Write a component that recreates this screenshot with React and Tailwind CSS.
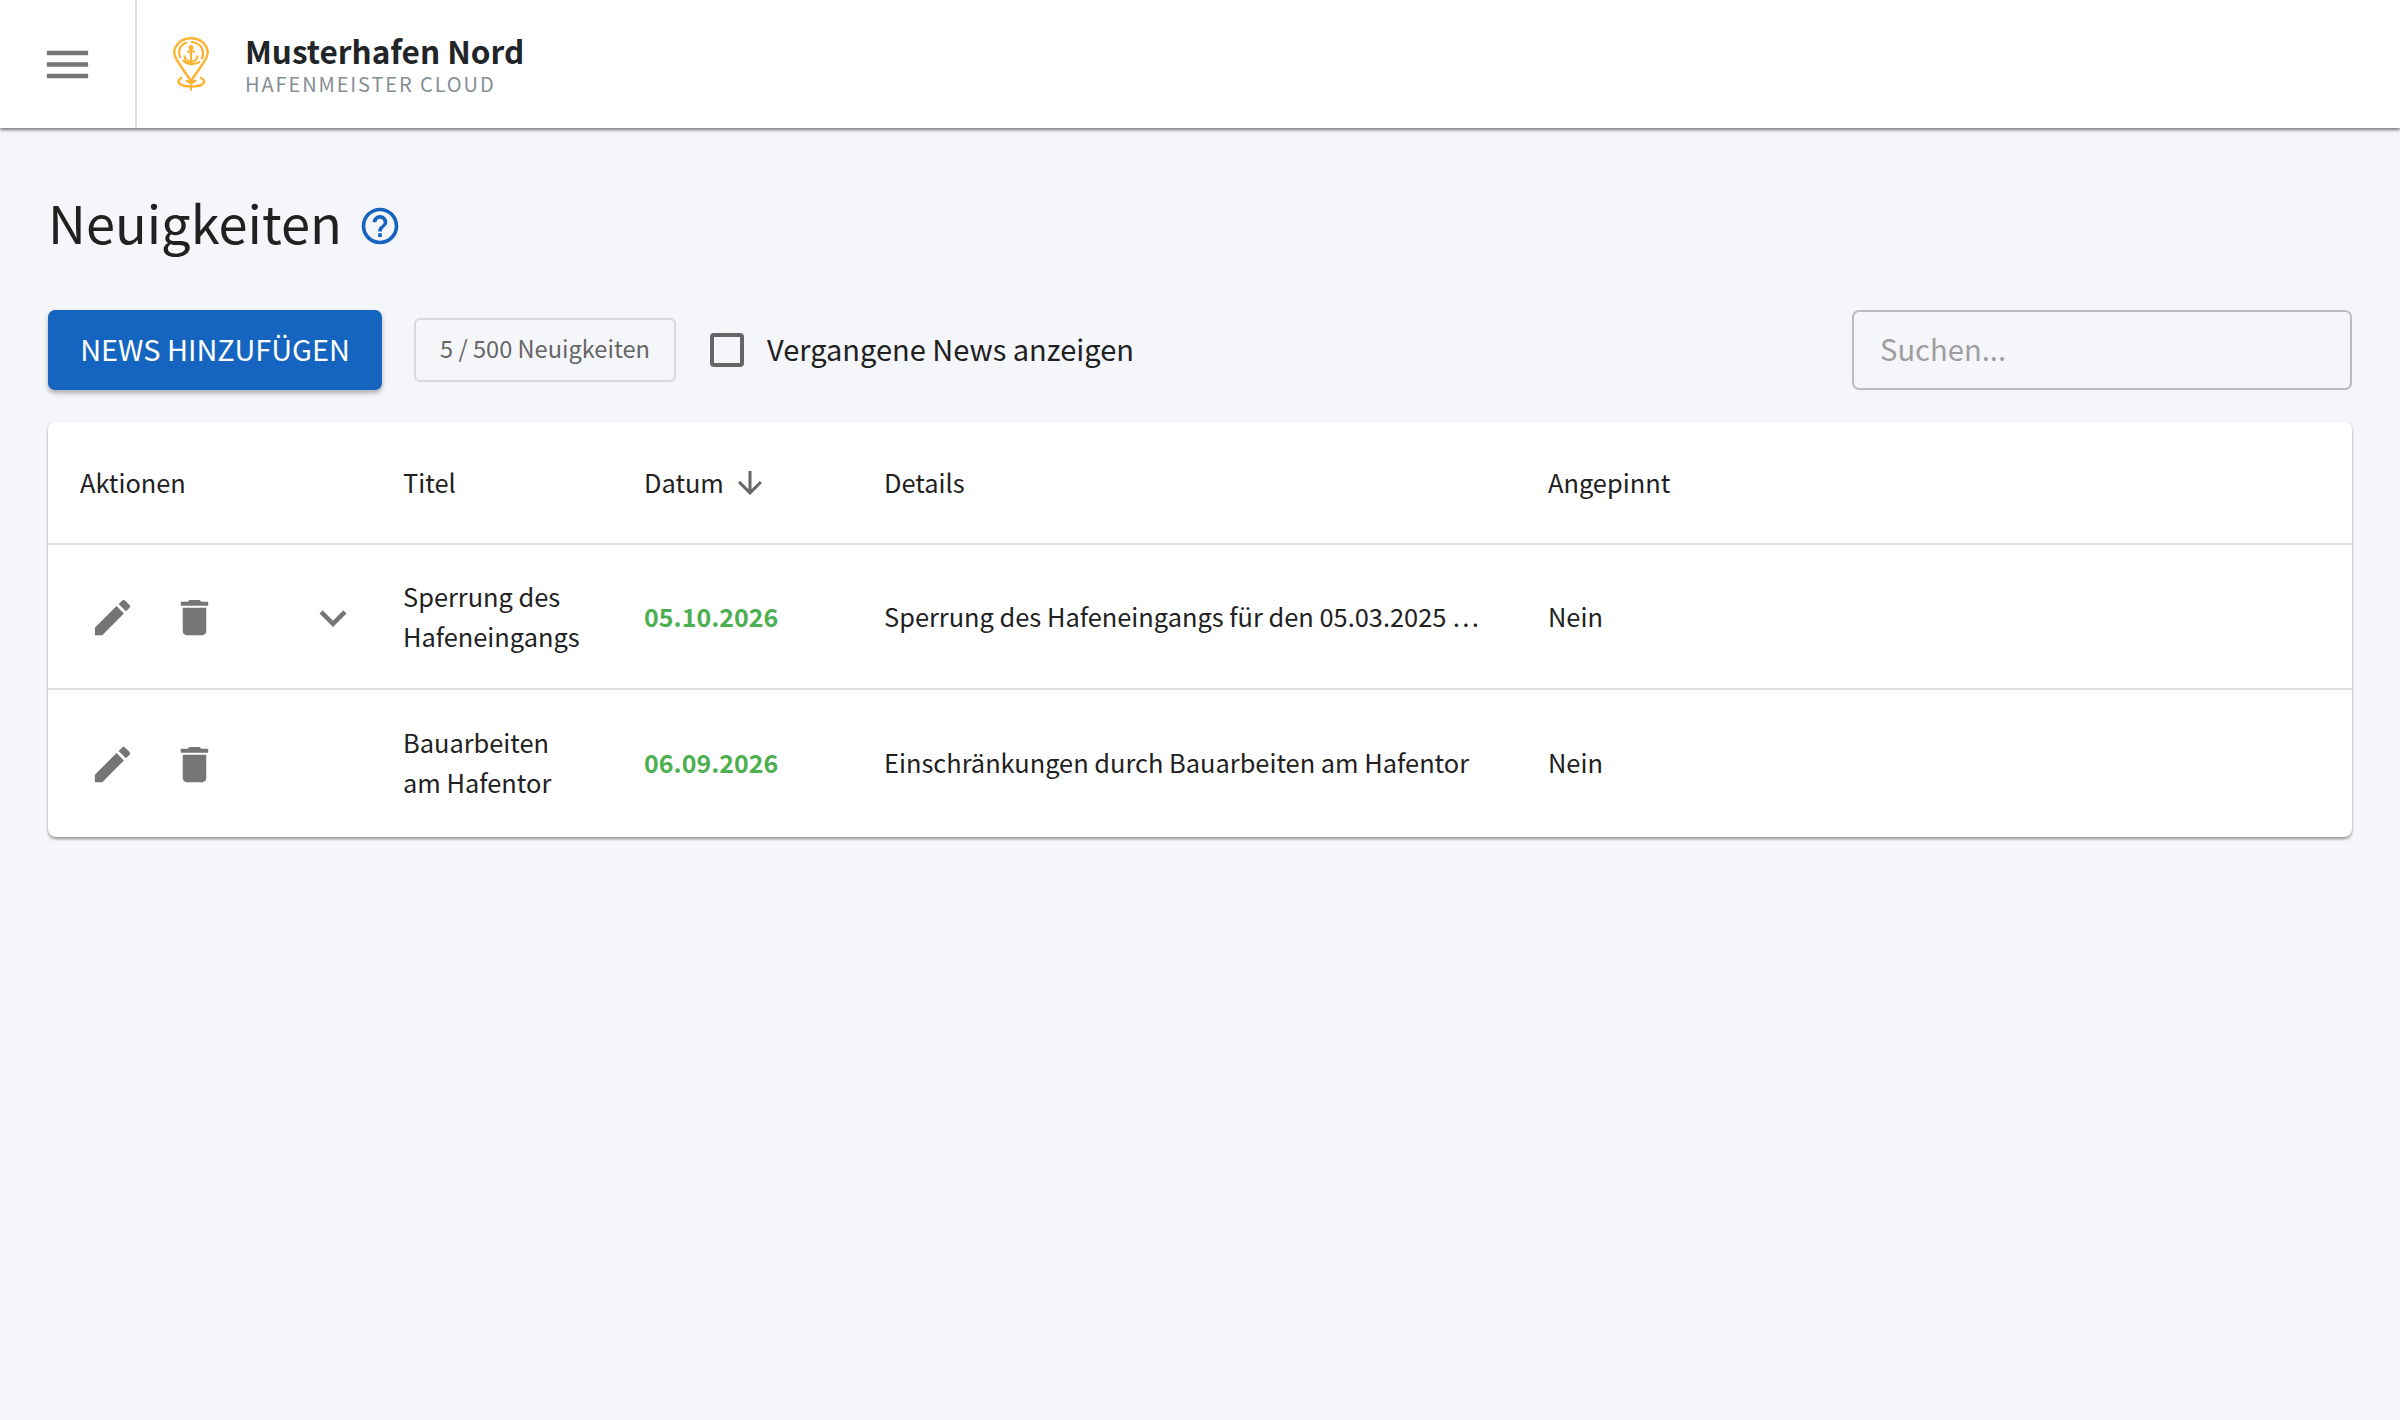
import React from "react";

const P = {
  menu: "M3 18h18v-2H3v2zm0-5h18v-2H3v2zm0-7v2h18V6H3z",
  help: "M11 18h2v-2h-2v2zm1-16C6.48 2 2 6.48 2 12s4.48 10 10 10 10-4.48 10-10S17.52 2 12 2zm0 18c-4.41 0-8-3.59-8-8s3.59-8 8-8 8 3.59 8 8-3.59 8-8 8zm0-14c-2.21 0-4 1.79-4 4h2c0-1.1.9-2 2-2s2 .9 2 2c0 2-3 1.75-3 5h2c0-2.25 3-2.5 3-5 0-2.21-1.79-4-4-4z",
  edit: "M3 17.25V21h3.75L17.81 9.94l-3.75-3.75L3 17.25zM20.71 7.04c.39-.39.39-1.02 0-1.41l-2.34-2.34c-.39-.39-1.02-.39-1.41 0l-1.83 1.83 3.75 3.75 1.83-1.83z",
  del: "M6 19c0 1.1.9 2 2 2h8c1.1 0 2-.9 2-2V7H6v12zM19 4h-3.5l-1-1h-5l-1 1H5v2h14V4z",
  more: "M16.59 8.59L12 13.17 7.41 8.59 6 10l6 6 6-6z",
  down: "M20 12l-1.41-1.41L13 16.17V4h-2v12.17l-5.58-5.59L4 12l8 8 8-8z",
};

function Icon({ d, className }) {
  return (
    <svg viewBox="0 0 24 24" fill="currentColor" className={className}>
      <path d={d} />
    </svg>
  );
}

function Logo() {
  return (
    <svg viewBox="0 0 36 54" fill="none" stroke="#ffb22e" strokeWidth="2.4" className="w-[36px] h-[54px]">
      <path d="M18 44 L5 25 C2 20 1.2 17 1.2 15 C2 7 9 1.2 18 1.2 C27 1.2 34 7 34.8 15 C34.8 17 34 20 31 25 L18 44" />
      <path d="M7.5 21 C4 13 8 7 14 5.5 M18 5 C25 5 30 10 30 16 C30 19 29.5 21 28.5 22" strokeWidth="2.2" />
      <path d="M10 23 C14 28 22 28.5 27 24.5" strokeWidth="2.2" />
      <circle cx="18" cy="10.5" r="2.5" fill="#ffb22e" stroke="none" />
      <path d="M18 12 V25 M14 14.5 H22 M11.5 18.5 C11.5 22.5 15 25 18 25 C21 25 24.5 22.5 24.5 18.5" strokeWidth="2.2" />
      <path d="M9 40.5 C5 42.5 4 45.5 8 47.5 C11 49.5 14 49.5 18 49.5 C22 49.5 26 49.5 29 47.5 C32 45.5 32 42.5 27 40.5" strokeWidth="2.4" />
      <path d="M12.5 43.5 L18 47.5 L23.5 43.5 Z" fill="#ffb22e" strokeWidth="1" />
      <path d="M18 48 V54" strokeWidth="1.8" />
    </svg>
  );
}

const rows = [
  { t: ["Sperrung des", "Hafeneingangs"], d: "05.10.2026", x: "Sperrung des Hafeneingangs für den 05.03.2025 …", p: "Nein", more: true, h: "h-[145px]", pb: "pb-[2px]" },
  { t: ["Bauarbeiten", "am Hafentor"], d: "06.09.2026", x: "Einschränkungen durch Bauarbeiten am Hafentor", p: "Nein", more: false, h: "h-[147px]", pb: "pb-[4px]" },
];

const cols = "grid grid-cols-[323px_241px_239px_664px_1fr] items-center";

export default function App() {
  return (
    <div className="min-h-[1420px] bg-[#f5f6fa] text-[#212121] font-['Noto_Sans_CJK_SC','Source_Sans_3',sans-serif]">
      <header className="h-[128px] bg-white flex items-stretch shadow-[0_2px_3px_rgba(0,0,0,0.5)] relative">
        <div className="w-[137px] border-r-2 border-[#dfe0e4] flex items-center justify-center">
          <Icon d={P.menu} className="w-[55px] h-[55px] text-[#757575]" />
        </div>
        <div className="flex items-center pl-[36px] gap-[36px]">
          <Logo />
          <div className="flex flex-col">
            <div className="text-[31.5px] leading-[36px] font-bold text-[#212529]">Musterhafen Nord</div>
            <div className="text-[20px] leading-[26px] mt-[3px] tracking-[1.9px] text-[#868e96]">HAFENMEISTER CLOUD</div>
          </div>
        </div>
      </header>

      <main className="px-[48px] pt-[48px]">
        <div className="flex items-center gap-[16px] h-[90px]">
          <h1 className="text-[52.4px] leading-[90px] font-normal">Neuigkeiten</h1>
          <Icon d={P.help} className="w-[44px] h-[44px] text-[#1565c0] mt-[10px]" />
        </div>

        <div className="flex items-center mt-[44px] h-[80px]">
          <button className="w-[334px] h-[80px] pb-[5px] rounded-[7px] bg-[#1565c0] text-white text-[28.9px] leading-[36px] shadow-[0_3px_5px_rgba(0,0,0,0.3)]">NEWS HINZUFÜGEN</button>
          <div className="ml-[32px] w-[262px] h-[64px] pb-[2px] rounded-[6px] border-2 border-[#d7d9de] text-[23.6px] text-[#666] flex items-center justify-center">5 / 500 Neuigkeiten</div>
          <div className="ml-[34px] w-[34px] h-[34px] border-[4px] border-[#666] rounded-[4px]" />
          <div className="ml-[23px] pb-[5px] text-[29px] leading-[40px]">Vergangene News anzeigen</div>
          <div className="ml-auto w-[500px] h-[80px] pb-[3px] rounded-[7px] border-2 border-[#bcbcc0] flex items-center pl-[26px] text-[29.2px] text-[#9e9e9e]">Suchen...</div>
        </div>

        <div className="mt-[32px] bg-white rounded-[8px] shadow-[0_2px_3px_rgba(0,0,0,0.4)] overflow-hidden">
          <div className={`${cols} h-[123px] border-b-2 border-[#e0e0e0] text-[25.4px] pl-[32px]`}>
            <div>Aktionen</div>
            <div>Titel</div>
            <div className="flex items-center gap-[8px]">Datum<Icon d={P.down} className="w-[36px] h-[36px] mt-[2px] text-[#666]" /></div>
            <div className="pl-[1px]">Details</div>
            <div className="pl-[1px]">Angepinnt</div>
          </div>
          {rows.map((r, i) => (
            <div key={i} className={`${cols} ${r.h} ${i === 0 ? "border-b-2 border-[#e0e0e0]" : ""} text-[25.4px] leading-[40px] pl-[32px]`}>
              <div className="flex items-center text-[#757575] -ml-[32px] mt-[2px]">
                <Icon d={P.edit} className="w-[47px] h-[47px] ml-[41px]" />
                <Icon d={P.del} className="w-[47px] h-[47px] ml-[35px]" />
                {r.more && <Icon d={P.more} className="w-[54px] h-[54px] ml-[88px]" />}
              </div>
              <div className={r.pb}>{r.t[0]}<br />{r.t[1]}</div>
              <div className={`font-bold text-[#4caf50] text-[25px] ${r.pb}`}>{r.d}</div>
              <div className={`pl-[1px] ${r.pb}`}>{r.x}</div>
              <div className={`pl-[1px] ${r.pb}`}>{r.p}</div>
            </div>
          ))}
        </div>
      </main>
    </div>
  );
}
